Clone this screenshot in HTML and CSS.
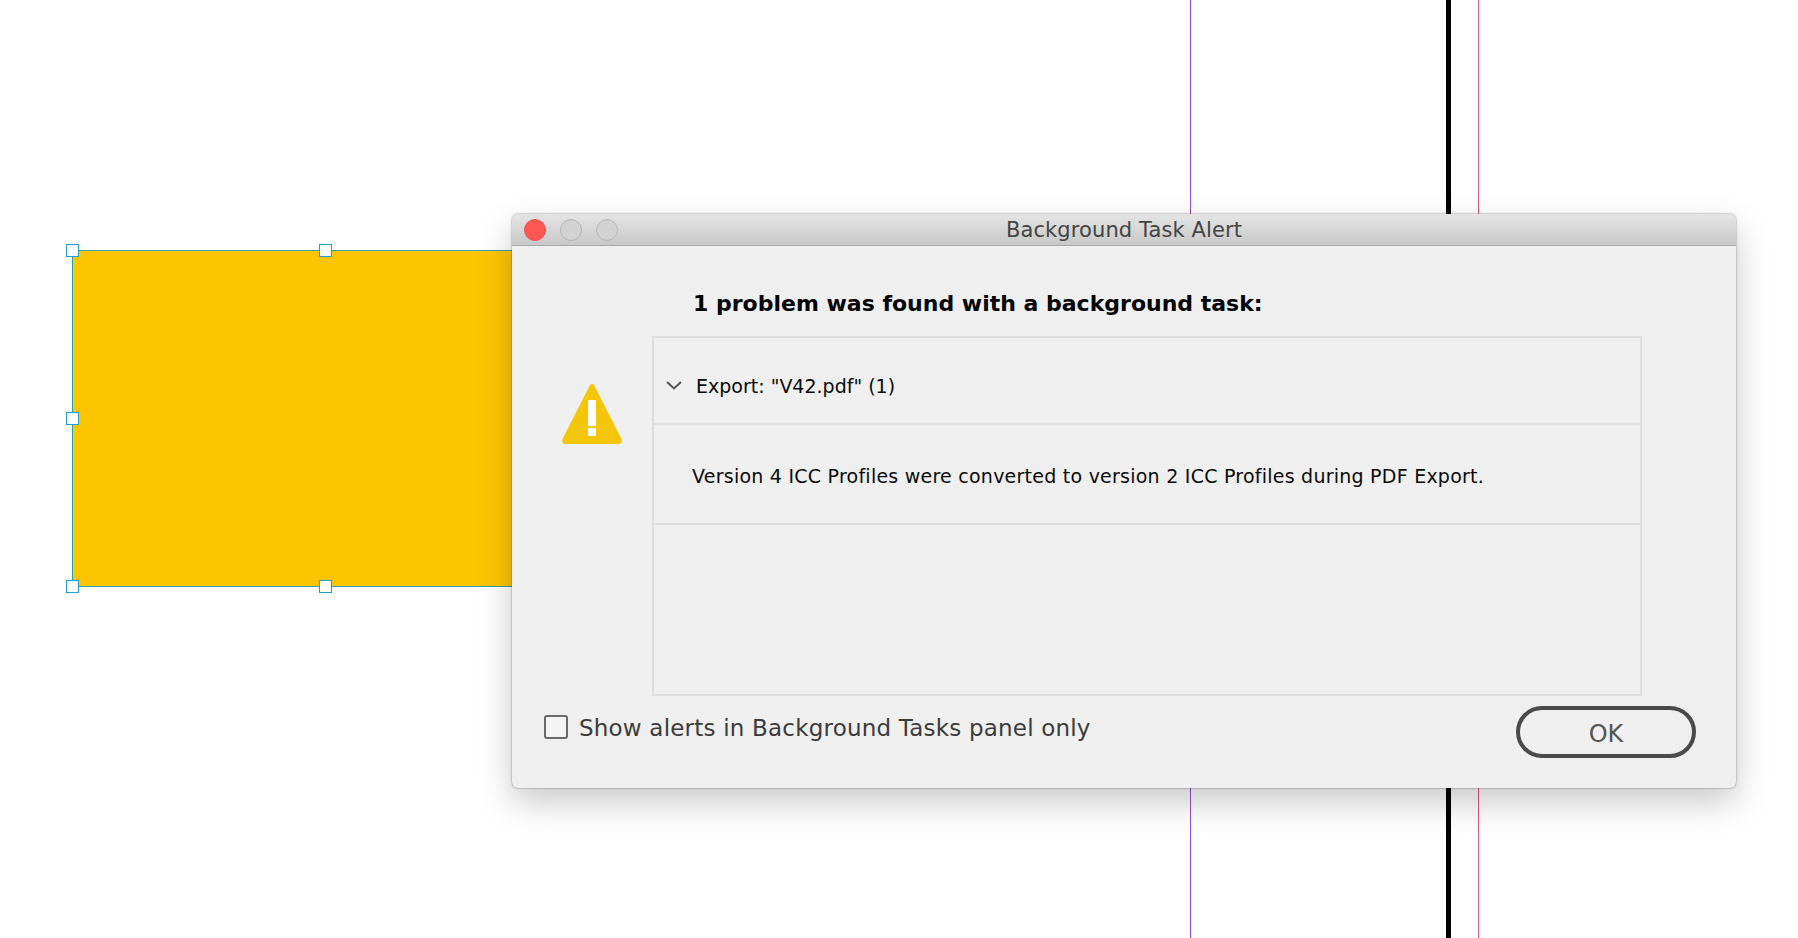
FILE: index.html
```html
<!DOCTYPE html>
<html lang="en">
<head>
  <meta charset="UTF-8">
  <title>Background Task Alert</title>
  <link rel="stylesheet" href="styles.css">
</head>
<body>

  <div class="guide guide-purple"></div>
  <div class="guide guide-black"></div>
  <div class="guide guide-pink"></div>

  <div class="frame">
    <span class="handle h-tl"></span>
    <span class="handle h-tm"></span>
    <span class="handle h-ml"></span>
    <span class="handle h-bl"></span>
    <span class="handle h-bm"></span>
  </div>

  <div class="dialog">
    <div class="titlebar">
      <div class="lights">
        <span class="light close"></span>
        <span class="light"></span>
        <span class="light"></span>
      </div>
      <div class="title">Background Task Alert</div>
    </div>

    <div class="dialog-main">
      <svg class="warn-icon" width="60" height="60" viewBox="0 0 60 60">
        <path d="M30 0 Q31.5 0 32.5 2 L59.5 55 Q60.5 60 56.5 60 L3.5 60 Q-0.5 60 0.5 55 L27.5 2 Q28.5 0 30 0 Z" fill="#f4c609"/>
        <rect x="26" y="16" width="8" height="26" fill="#fff"/>
        <rect x="26" y="44" width="8" height="8" fill="#fff"/>
      </svg>
      <div class="content">
        <h1 class="heading">1 problem was found with a background task:</h1>
        <div class="task-table">
          <div class="task-row">
            <svg class="chevron" width="16" height="9" viewBox="0 0 16 9">
              <path d="M1 1 L8 7.5 L15 1" fill="none" stroke="#555" stroke-width="2"/>
            </svg>
            <span>Export: "V42.pdf" (1)</span>
          </div>
          <div class="task-msg">Version 4 ICC Profiles were converted to version 2 ICC Profiles during PDF Export.</div>
          <div class="task-empty"></div>
        </div>
      </div>
    </div>

    <div class="dialog-footer">
      <label class="check-label">
        <span class="checkbox"></span>
        <span>Show alerts in Background Tasks panel only</span>
      </label>
      <button class="ok-btn">OK</button>
    </div>
  </div>

</body>
</html>
```

FILE: styles.css
```css
* {
  box-sizing: border-box;
}

html,
body {
  height: 100%;
}

body {
  margin: 0;
  background: #fff;
  font-family: "DejaVu Sans", sans-serif;
  overflow: hidden;
  position: relative;
}

.guide {
  position: absolute;
  top: 0;
  bottom: 0;
}

.guide-purple {
  left: 1190px;
  width: 1px;
  background: #9a4fd0;
}

.guide-black {
  left: 1446px;
  width: 5px;
  background: #000;
}

.guide-pink {
  left: 1478px;
  width: 1px;
  background: #e0567f;
}

.frame {
  position: absolute;
  left: 72px;
  top: 250px;
  width: 500px;
  height: 337px;
  background: #fdc500;
  border: 1px solid #2aa3a6;
}

.handle {
  position: absolute;
  width: 13px;
  height: 13px;
  background: #fff;
  border: 1px solid #1f9fd6;
}

.h-tl { left: -7px; top: -7px; }
.h-tm { left: 246px; top: -7px; }
.h-ml { left: -7px; top: 161px; }
.h-bl { left: -7px; top: 329px; }
.h-bm { left: 246px; top: 329px; }

.dialog {
  position: absolute;
  left: 512px;
  top: 214px;
  width: 1224px;
  height: 574px;
  background: #efefef;
  border-radius: 6px;
  box-shadow: 0 0 2px rgba(0,0,0,0.5), 0 14px 34px rgba(0,0,0,0.22);
  overflow: hidden;
}

.titlebar {
  position: relative;
  height: 32px;
  background: linear-gradient(#e4e4e4, #c8c8c8);
  border-bottom: 1px solid #a9a9a9;
  display: flex;
  align-items: center;
  justify-content: center;
}

.lights {
  position: absolute;
  left: 12px;
  top: 5px;
  display: flex;
  gap: 14px;
}

.light {
  width: 22px;
  height: 22px;
  border-radius: 50%;
  border: 1px solid #b4b4b4;
  background: #d2d2d2;
}

.light.close {
  background: #fc5753;
  border-color: #f0504c;
}

.title {
  font-size: 21px;
  letter-spacing: 0.1px;
  color: #444;
}

.dialog-main {
  display: flex;
  padding-left: 50px;
}

.warn-icon {
  margin-top: 138px;
  flex-shrink: 0;
}

.content {
  margin-left: 30px;
  width: 990px;
}

.heading {
  margin: 42px 0 16px 41px;
  height: 32px;
  line-height: 32px;
  font-size: 22px;
  font-weight: bold;
  color: #000;
  white-space: nowrap;
}

.task-table {
  height: 360px;
  border: 2px solid #dedede;
  display: flex;
  flex-direction: column;
  font-size: 19px;
  color: #0a0a0a;
}

.task-row {
  height: 87px;
  flex-shrink: 0;
  padding: 10px 0 0 12px;
  border-bottom: 2px solid #dedede;
  display: flex;
  align-items: center;
  gap: 14px;
}

.task-msg {
  height: 100px;
  flex-shrink: 0;
  padding: 4px 0 0 38px;
  border-bottom: 2px solid #dedede;
  display: flex;
  align-items: center;
  letter-spacing: 0.24px;
}

.task-empty {
  flex: 1;
}

.dialog-footer {
  display: flex;
  justify-content: space-between;
  align-items: flex-start;
  margin-top: 10px;
  padding: 0 40px 0 32px;
}

.check-label {
  display: flex;
  align-items: center;
  gap: 11px;
  margin-top: 9px;
  font-size: 23px;
  letter-spacing: 0.2px;
  color: #3b3b3b;
}

.checkbox {
  width: 24px;
  height: 24px;
  margin-top: -3px;
  background: #f4f4f4;
  border: 2px solid #6a6a6a;
  border-radius: 3px;
}

.ok-btn {
  width: 180px;
  height: 52px;
  padding-top: 5px;
  background: #efefef;
  border: 4px solid #4a4a4a;
  border-radius: 26px;
  font-family: "DejaVu Sans", sans-serif;
  font-size: 24px;
  color: #555;
}
```
